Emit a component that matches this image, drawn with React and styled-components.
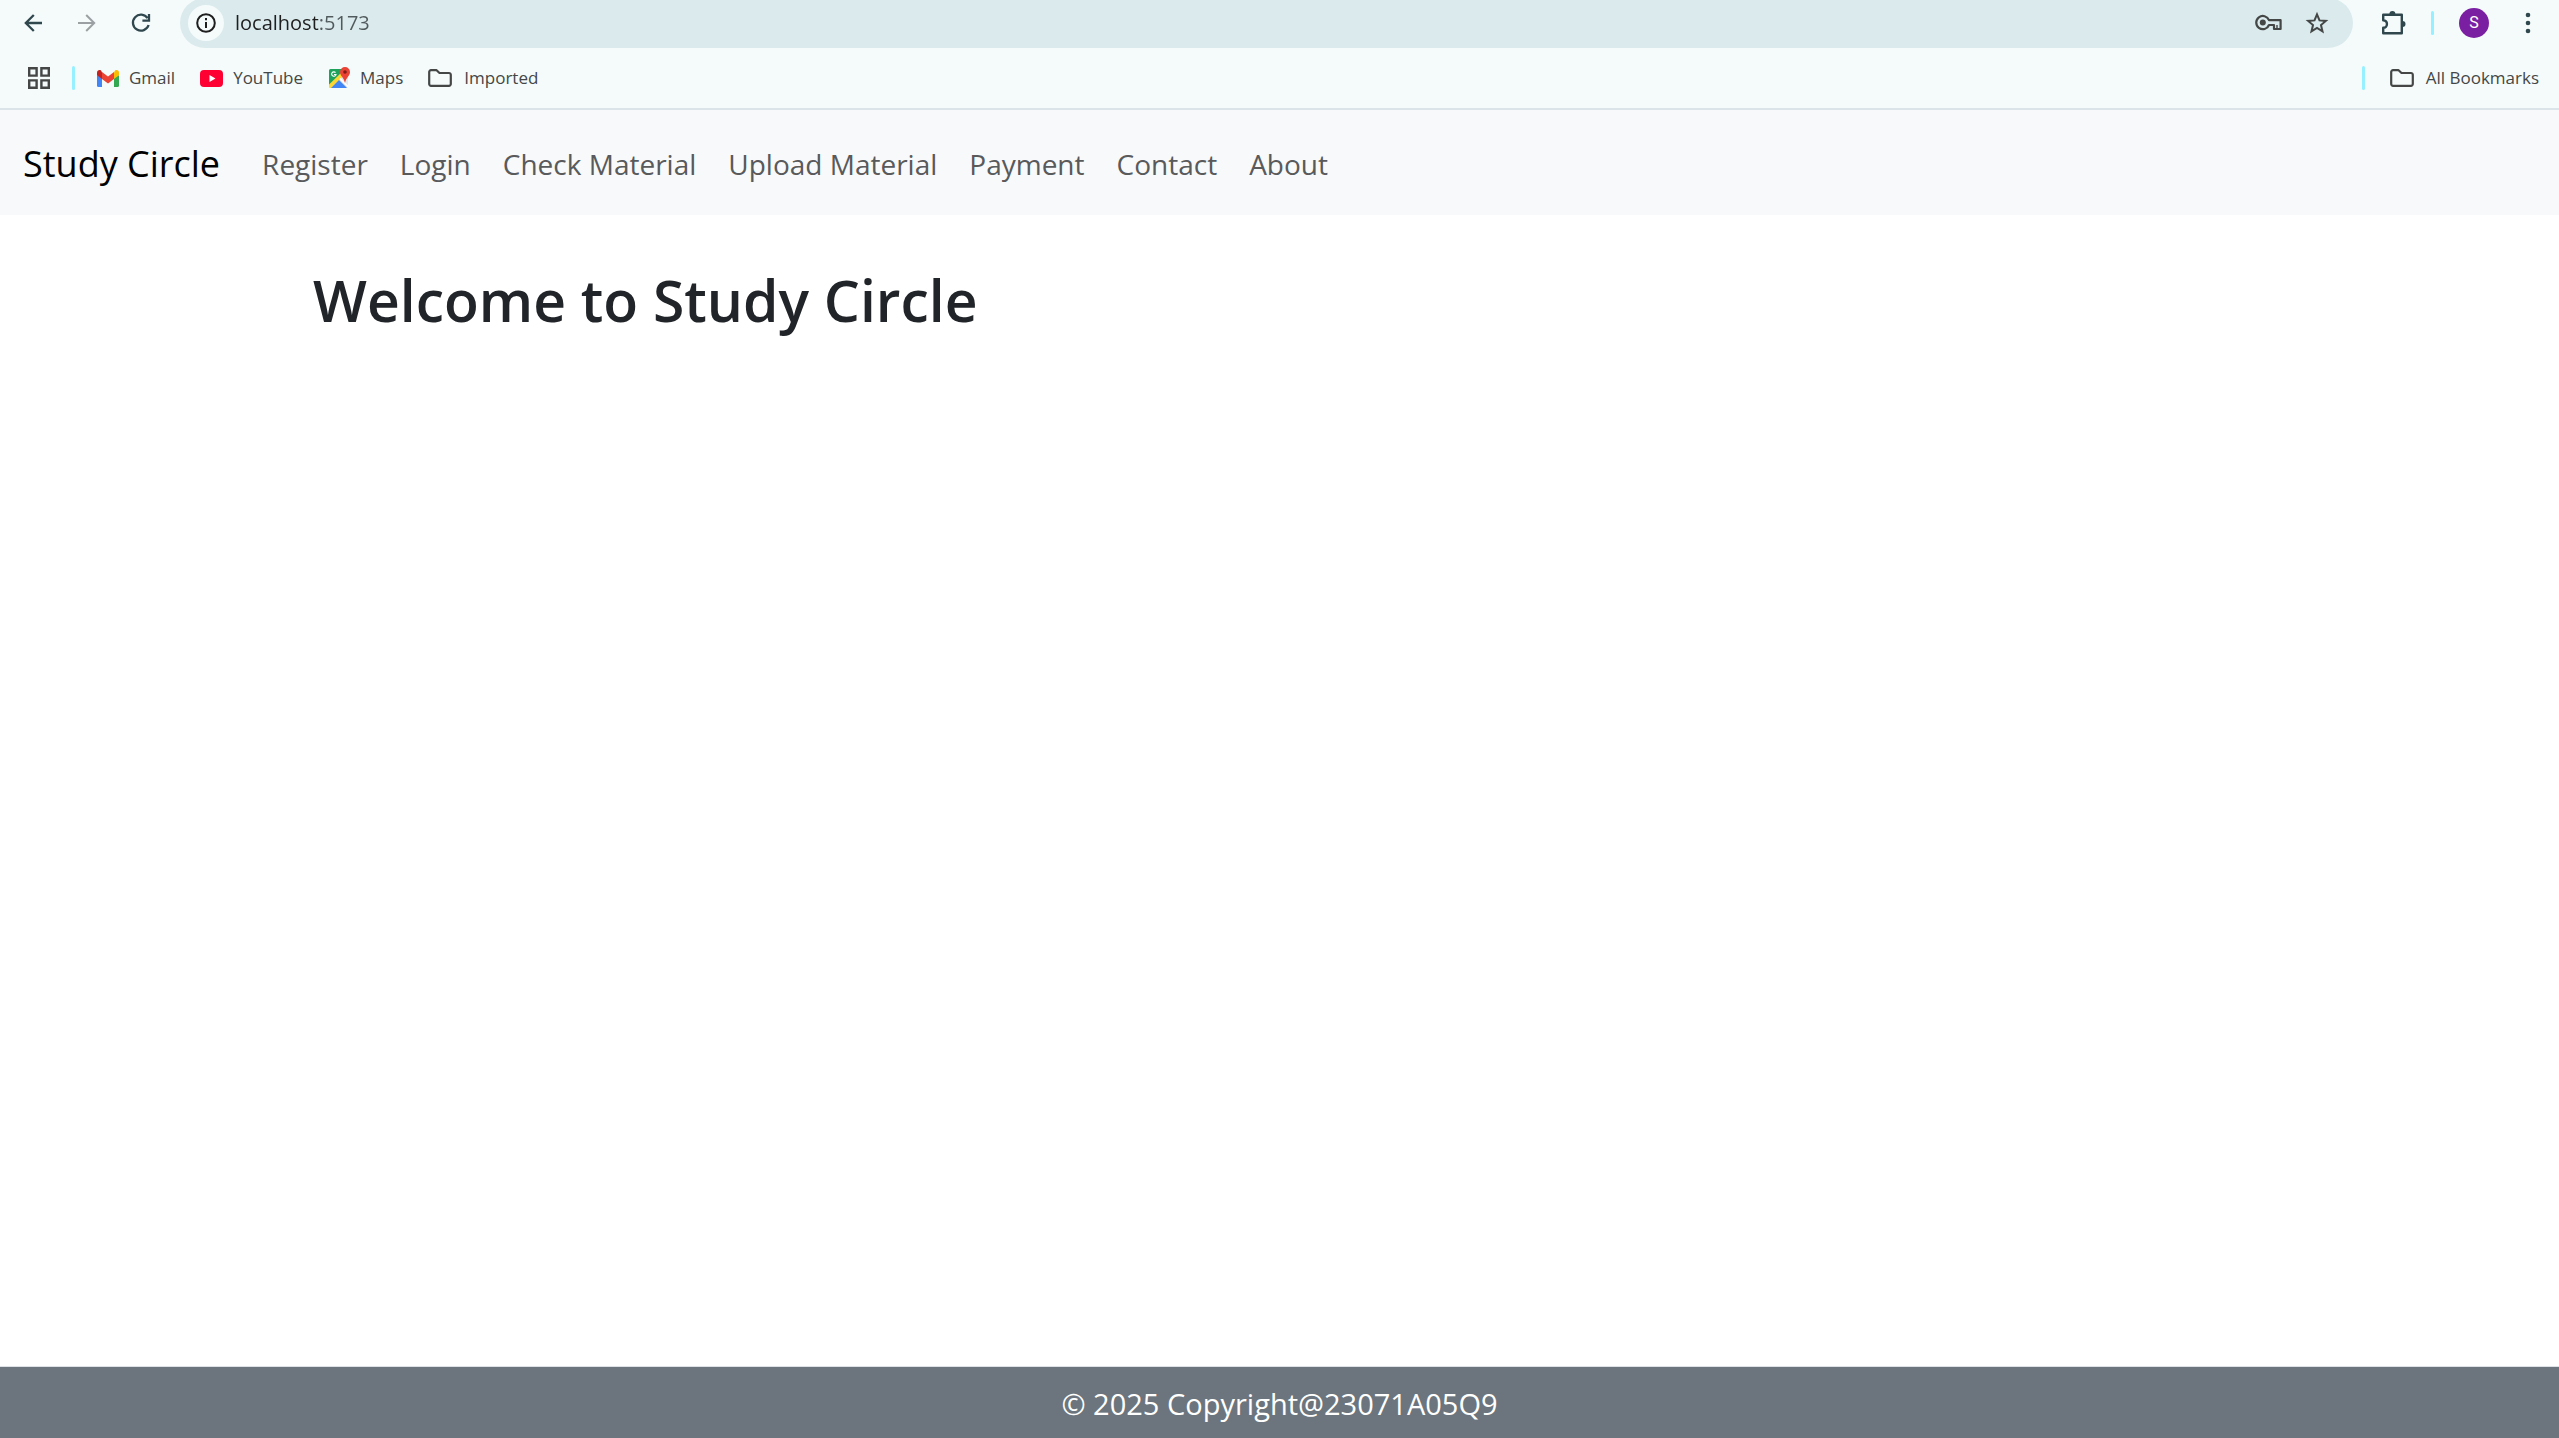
import React from "react";
import styled, { createGlobalStyle } from "styled-components";

const Global = createGlobalStyle`
  * { box-sizing: border-box; }
  body {
    margin: 0;
    background: #fff;
    color: #212529;
    font-family: "Open Sans", "Noto Sans", sans-serif;
  }
  svg { display: block; flex: none; }
`;

const Screen = styled.div`
  min-height: 100vh;
  display: flex;
  flex-direction: column;
`;

const BrowserBar = styled.header`
  background: #f5fbfb;
  border-bottom: 2px solid #dbe4e9;
  overflow: hidden;
`;

const Toolbar = styled.div`
  display: flex;
  align-items: center;
  height: 46px;
  padding: 0 17px 0 6px;
  color: #2f474d;
`;

const IconButton = styled.button`
  display: flex;
  align-items: center;
  justify-content: center;
  flex: none;
  width: ${(p) => p.$width || 54}px;
  height: 40px;
  padding: 0;
  border: 0;
  background: none;
  color: inherit;
  font: inherit;
  &:disabled { color: #9ba1a3; }
`;

const AddressBar = styled.form`
  flex: 1;
  display: flex;
  align-items: center;
  height: 50px;
  margin: 0 14px 0 12px;
  padding: 0 12px 0 8px;
  border-radius: 25px;
  background: #dbeaed;
  color: #444746;
`;

const SiteInfo = styled.button`
  display: flex;
  align-items: center;
  justify-content: center;
  width: 36px;
  height: 36px;
  padding: 0;
  border: 0;
  border-radius: 50%;
  background: #f5fbfb;
  color: #1f1f1f;
`;

const Address = styled.input`
  flex: 1;
  min-width: 0;
  height: 36px;
  margin-left: 11px;
  padding: 0;
  border: 0;
  outline: 0;
  background: linear-gradient(90deg, #1f1f1f 83px, #50595b 83px);
  background-clip: text;
  color: transparent;
  font: 20px/36px "Open Sans", "Noto Sans", sans-serif;
`;

const Divider = styled.span`
  flex: none;
  width: 3px;
  height: 24px;
  margin-left: ${(p) => p.$before || 0}px;
  border-radius: 2px;
  background: #97f0ff;
`;

const Avatar = styled.span`
  display: flex;
  align-items: center;
  justify-content: center;
  width: 30px;
  height: 30px;
  border-radius: 50%;
  background: #7b1fa2;
  color: #fff;
  font: 16px/30px Roboto, sans-serif;
`;

const Bookmarks = styled.nav`
  display: flex;
  align-items: center;
  height: 62px;
  padding: 2px 20px 0 12px;
  color: #444746;
`;

const Bookmark = styled.a`
  display: flex;
  align-items: center;
  gap: ${(p) => p.$gap || 10}px;
  margin-left: ${(p) => p.$before || 25}px;
  color: #444746;
  font-size: 17px;
  line-height: 24px;
  text-decoration: none;
  white-space: nowrap;
`;

const Spacer = styled.span`
  flex: 1;
`;

const Navbar = styled.nav`
  display: flex;
  align-items: center;
  min-height: 105px;
  padding: 2px 23px 0;
  background: #f8f9fa;
`;

const Brand = styled.a`
  margin-right: 42px;
  color: #000;
  font-size: 36px;
  line-height: 56px;
  text-decoration: none;
  white-space: nowrap;
`;

const NavList = styled.ul`
  display: flex;
  gap: 32px;
  margin: 0;
  padding: 0;
  list-style: none;
`;

const NavLink = styled.a`
  color: #595a5b;
  font-size: 28px;
  line-height: 44px;
  text-decoration: none;
  white-space: nowrap;
`;

const Main = styled.main`
  flex: 1;
  width: 76%;
  margin: 0 auto;
  padding: 45px 6px;
`;

const Title = styled.h1`
  margin: 0;
  font-size: 57px;
  font-weight: 600;
  line-height: 80px;
`;

const Footer = styled.footer`
  padding: 16px 15px 14px;
  border-top: 1px solid #dee2e6;
  background: #6c757d;
  color: #fff;
  font-size: 29px;
  line-height: 41px;
  text-align: center;
`;

const Svg = ({ w, h, children, ...rest }) => (
  <svg width={w} height={h} viewBox={`0 0 ${w} ${h}`} fill="none" stroke="currentColor" aria-hidden="true" {...rest}>
    {children}
  </svg>
);

const BackIcon = () => (
  <Svg w={18} h={18} strokeWidth="2.3">
    <path d="M18 9H2M9.8 1 1.8 9l8 8" />
  </Svg>
);

const ForwardIcon = () => (
  <Svg w={18} h={18} strokeWidth="2">
    <path d="M0 9h16M8.2 1l8 8-8 8" />
  </Svg>
);

const ReloadIcon = () => (
  <Svg w={20} h={20} strokeWidth="2.3">
    <path d="M16.6 5.2A8 8 0 1 0 17.6 12M18 1v6.6h-6.6" />
  </Svg>
);

const InfoIcon = () => (
  <Svg w={20} h={20} strokeWidth="2">
    <circle cx="10" cy="10" r="8.8" />
    <path d="M10 9v6M10 5v2.2" />
  </Svg>
);

const KeyIcon = () => (
  <Svg w={28} h={18} strokeWidth="2.2">
    <path d="M14 6.2A6.6 6.6 0 1 0 14 11h5v4h6.6V6.2Z" strokeLinejoin="round" />
    <path d="M22 11v4" strokeWidth="1.4" />
    <circle cx="7.8" cy="8.6" r="3" fill="currentColor" stroke="none" />
  </Svg>
);

const StarIcon = () => (
  <Svg w={24} h={24} strokeWidth="2">
    <path d="m12 3.4 2.5 6 6.4.5-4.9 4.2 1.5 6.3-5.5-3.4-5.5 3.4L8 14.1 3.1 9.9l6.4-.5Z" />
  </Svg>
);

const PuzzleIcon = () => (
  <Svg w={26} h={26} strokeWidth="2.4">
    <path d="M2.2 4.7h18.600v18.600H2.200v-5.500c5 0 5-7.600 0-7.600Z" strokeLinejoin="round" />
    <path d="M8.400 4a3 3 0 0 1 6 0ZM21.500 11a3 3 0 0 1 0 6Z" fill="currentColor" stroke="none" />
  </Svg>
);

const DotsIcon = () => (
  <Svg w={6} h={22} fill="currentColor" stroke="none">
    <circle cx="3" cy="3" r="2.3" />
    <circle cx="3" cy="11" r="2.3" />
    <circle cx="3" cy="19" r="2.3" />
  </Svg>
);

const AppsIcon = () => (
  <Svg w={22} h={22} strokeWidth="2.4">
    <path d="M1.2 1.2h7.4v7.4H1.2ZM13.4 1.2h7.4v7.4h-7.4ZM1.2 13.4h7.4v7.4H1.2ZM13.4 13.4h7.4v7.4h-7.4Z" />
  </Svg>
);

const GmailIcon = () => (
  <Svg w={22} h={17} stroke="none">
    <path d="M0 5v10.5A1.5 1.5 0 0 0 1.5 17H5V8Z" fill="#4285f4" />
    <path d="M17 8v9h3.5a1.5 1.5 0 0 0 1.5-1.5V5Z" fill="#34a853" />
    <path d="M17 2.5V9l5-3.7V2.5c0-2.100-2.300-3.200-4-2Z" fill="#fbbc04" />
    <path d="M5 9V2l6 4.5L17 2v7l-6 4.5Z" fill="#ea4335" />
    <path d="M0 2.5v2.800L5 9V2.300L4 .5C2.300-.7 0 .4 0 2.500Z" fill="#c5221f" />
  </Svg>
);

const YouTubeIcon = () => (
  <Svg w={23} h={17} stroke="none">
    <rect width="23" height="17" rx="4" fill="#ff0033" />
    <path d="M9.5 5v7l6-3.500Z" fill="#fff" />
  </Svg>
);

const MapsIcon = () => (
  <Svg w={22} h={22} stroke="none">
    <rect x="1" y="2" width="19" height="19" rx="2" fill="#e4e7e8" />
    <path d="M2.5 2H15v6L1 20V3.500A1.500 1.500 0 0 1 2.500 2Z" fill="#1fa35c" />
    <path d="m10.5 12.5 8.500 8.500H2.500Z" fill="#4285f4" />
    <path d="M1 17.5 13.500 5.500l2 3L3 21H2a1 1 0 0 1-1-1Z" fill="#fdd835" />
    <path d="m12 11.500 8 8" stroke="#fff" strokeWidth="1.5" />
    <path d="M7.500 5.600A2.200 2.200 0 1 0 8 7.500H6" stroke="#fff" strokeWidth="1.2" />
    <path d="M17 0a5 5 0 0 1 5 5c0 4-3.800 5-5 11-1.200-6-5-7-5-11a5 5 0 0 1 5-5Z" fill="#ea4335" />
    <circle cx="17" cy="5" r="1.8" fill="#7f1d16" />
  </Svg>
);

const FolderIcon = () => (
  <Svg w={24} h={18} strokeWidth="2.2" strokeLinejoin="round">
    <path d="M3 1.2h5.600L11.500 4H21a1.800 1.800 0 0 1 1.800 1.800V15A1.800 1.800 0 0 1 21 16.800H3A1.800 1.800 0 0 1 1.200 15V3A1.800 1.800 0 0 1 3 1.200Z" />
  </Svg>
);

const links = ["Register", "Login", "Check Material", "Upload Material", "Payment", "Contact", "About"];

export default function App() {
  return (
    <Screen>
      <Global />
      <BrowserBar>
        <Toolbar>
          <IconButton aria-label="Back"><BackIcon /></IconButton>
          <IconButton aria-label="Forward" disabled><ForwardIcon /></IconButton>
          <IconButton aria-label="Reload"><ReloadIcon /></IconButton>
          <AddressBar onSubmit={(e) => e.preventDefault()}>
            <SiteInfo type="button" aria-label="Site information"><InfoIcon /></SiteInfo>
            <Address aria-label="Address" defaultValue="localhost:5173" spellCheck={false} />
            <IconButton type="button" aria-label="Passwords" $width={48}><KeyIcon /></IconButton>
            <IconButton type="button" aria-label="Bookmark this page" $width={48}><StarIcon /></IconButton>
          </AddressBar>
          <IconButton aria-label="Extensions"><PuzzleIcon /></IconButton>
          <Divider $before={10} />
          <IconButton aria-label="Profile" $width={80}><Avatar>S</Avatar></IconButton>
          <IconButton aria-label="Menu" $width={28}><DotsIcon /></IconButton>
        </Toolbar>
        <Bookmarks aria-label="Bookmarks">
          <IconButton aria-label="Apps"><AppsIcon /></IconButton>
          <Divider $before={6} />
          <Bookmark href="#gmail" $before={22}><GmailIcon />Gmail</Bookmark>
          <Bookmark href="#youtube"><YouTubeIcon />YouTube</Bookmark>
          <Bookmark href="#maps"><MapsIcon />Maps</Bookmark>
          <Bookmark href="#imported" $gap={12}><FolderIcon />Imported</Bookmark>
          <Spacer />
          <Divider />
          <Bookmark href="#all" $gap={12}><FolderIcon />All Bookmarks</Bookmark>
        </Bookmarks>
      </BrowserBar>
      <Navbar aria-label="Main">
        <Brand href="#home">Study Circle</Brand>
        <NavList>
          {links.map((label) => (
            <li key={label}><NavLink href={`#${label.toLowerCase().replace(" ", "-")}`}>{label}</NavLink></li>
          ))}
        </NavList>
      </Navbar>
      <Main>
        <Title>Welcome to Study Circle</Title>
      </Main>
      <Footer>© 2025 Copyright@23071A05Q9</Footer>
    </Screen>
  );
}
